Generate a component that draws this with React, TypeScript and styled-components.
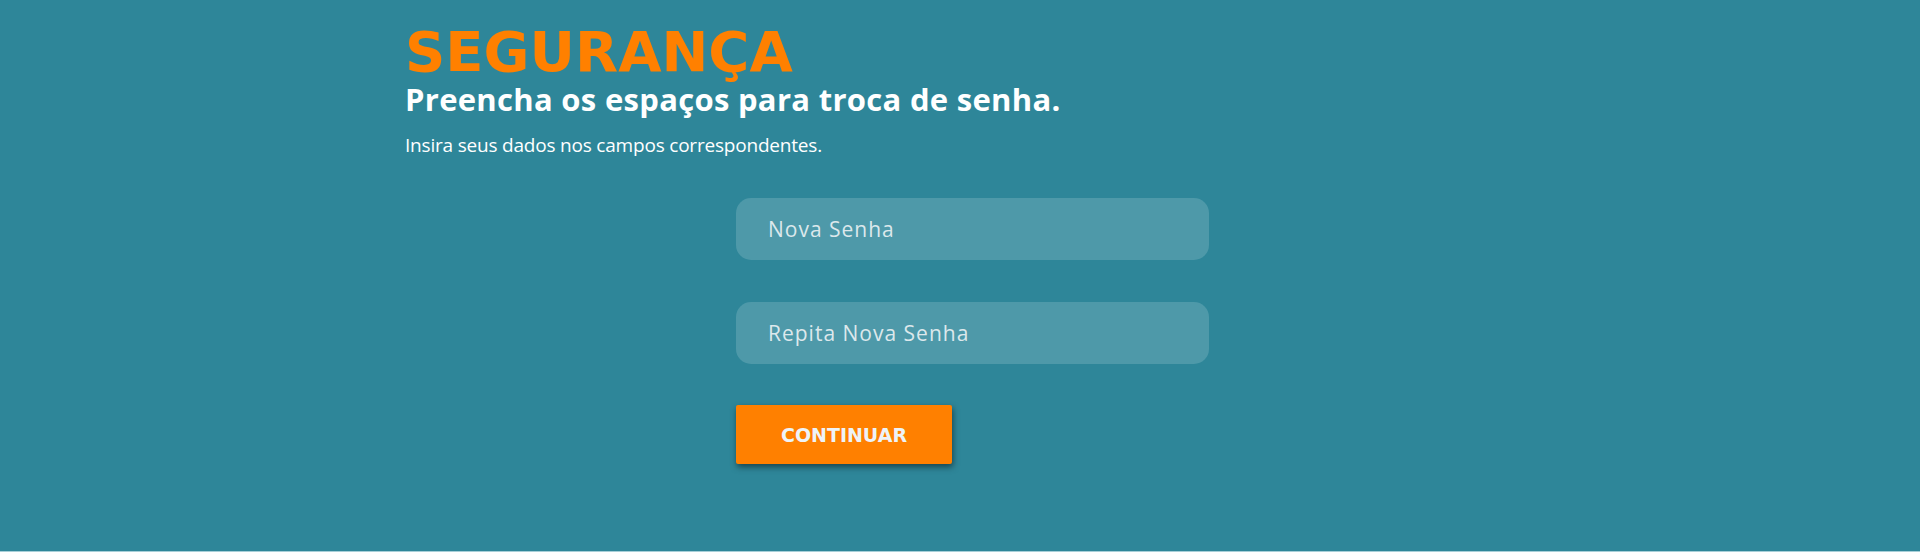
import React from "react";
import styled, { createGlobalStyle } from "styled-components";

const Global = createGlobalStyle`
  html, body { margin: 0; padding: 0; background: #a7cfd8; }
  * { box-sizing: border-box; }
`;

const Section = styled.section`
  height: 551px;
  background: #2e8699;
  padding: 22px 0 0 405px;
`;

const Title = styled.h1`
  margin: 0;
  font-family: "DejaVu Sans", sans-serif;
  font-weight: 700;
  font-size: 56px;
  line-height: 60px;
  color: #ff8000;
  letter-spacing: 0;
`;

const Subtitle = styled.h2`
  margin: 0;
  font-family: "Open Sans", sans-serif;
  font-weight: 700;
  font-size: 31px;
  line-height: 34px;
  color: #ffffff;
  letter-spacing: 0.3px;
`;

const Lead = styled.p`
  margin: 17px 0 0;
  font-family: "Open Sans", sans-serif;
  font-size: 19px;
  line-height: 24px;
  color: #ffffff;
  letter-spacing: -0.2px;
`;

const Form = styled.form`
  margin: 41px 0 0 331px;
  width: 473px;
  display: flex;
  flex-direction: column;
  gap: 42px;
`;

const Field = styled.input`
  height: 62px;
  width: 100%;
  border: none;
  outline: none;
  border-radius: 15px;
  background: #4e99a9;
  padding: 0 32px;
  font-family: "Open Sans", sans-serif;
  font-size: 21px;
  letter-spacing: 1px;
  color: #dce8ec;
  &::placeholder { color: #dce8ec; opacity: 1; }
`;

const Actions = styled.div`
  margin-top: -1px;
`;

const Button = styled.button`
  width: 216px;
  height: 59px;
  border: none;
  border-radius: 2px;
  background: #ff8000;
  color: #eef3f7;
  font-family: "DejaVu Sans", sans-serif;
  font-weight: 700;
  font-size: 19px;
  letter-spacing: 0;
  box-shadow: 1px 3px 6px rgba(0, 0, 0, 0.5);
  cursor: pointer;
`;

export default function App() {
  return (
    <>
      <Global />
      <Section>
        <Title>SEGURANÇA</Title>
        <Subtitle>Preencha os espaços para troca de senha.</Subtitle>
        <Lead>Insira seus dados nos campos correspondentes.</Lead>
        <Form onSubmit={(e) => e.preventDefault()}>
          <Field type="password" placeholder="Nova Senha" />
          <Field type="password" placeholder="Repita Nova Senha" />
          <Actions>
            <Button type="submit">CONTINUAR</Button>
          </Actions>
        </Form>
      </Section>
    </>
  );
}
